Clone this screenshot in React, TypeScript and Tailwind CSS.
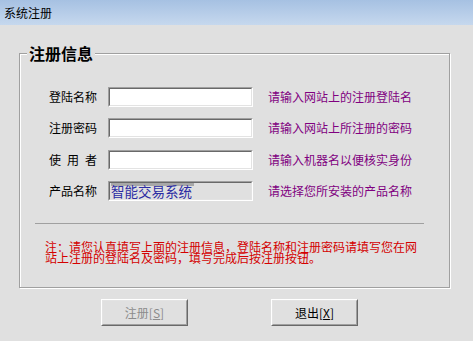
import React from "react";

const font = { fontFamily: '"Noto Sans CJK SC", "Noto Sans", sans-serif' };

function Sunken({ children, disabled }: { children?: React.ReactNode; disabled?: boolean }) {
  return (
    <div className="w-[145px] h-[20px] border border-t-[#a0a0a0] border-l-[#a0a0a0] border-b-white border-r-white">
      <div
        className={`w-full h-full border border-t-[#696969] border-l-[#696969] border-b-[#e3e3e3] border-r-[#e3e3e3] ${
          disabled ? "bg-[#e0e0e0]" : "bg-white"
        } flex items-center`}
      >
        {children}
      </div>
    </div>
  );
}

function Row({ label, hint, children, mt }: { label: React.ReactNode; hint: string; children?: React.ReactNode; mt: string }) {
  return (
    <div className={`flex items-center h-[20px] ${mt}`}>
      <div className="ml-[29px] w-[48px] text-[12px] leading-[12px] text-black">{label}</div>
      <div className="ml-[11px]">{children}</div>
      <div className="ml-[15px] text-[12px] leading-[12px] text-[#800080]">{hint}</div>
    </div>
  );
}

function Button({ children, disabled }: { children: React.ReactNode; disabled?: boolean }) {
  return (
    <div className="w-[87px] h-[27px] border border-t-white border-l-white border-b-[#696969] border-r-[#696969]">
      <div
        className={`w-full h-full border border-t-[#e3e3e3] border-l-[#e3e3e3] border-b-[#a0a0a0] border-r-[#a0a0a0] flex items-center justify-center text-[12px] ${
          disabled ? "text-[#8c8c8c]" : "text-black"
        }`}
      >
        {children}
      </div>
    </div>
  );
}

export default function App() {
  return (
    <div className="w-[473px] h-[341px] bg-[#e0e0e0] overflow-hidden" style={font}>
      <div className="h-[25px] bg-gradient-to-b from-[#a6c1e2] to-[#c6d8ee] flex items-center pl-[4px] text-[12px] text-black">
        系统注册
      </div>
      <div className="relative ml-[19px] mt-[28px] w-[431px] h-[235px] border border-[#a0a0a0] shadow-[1px_1px_0_#ffffff,inset_1px_1px_0_#ffffff]">
        <div className="absolute left-[7px] top-[-10px] bg-[#e0e0e0] px-[2px] text-[16px] leading-[18px] font-bold text-black">
          注册信息
        </div>
        <div className="pt-[33px] flex flex-col">
          <Row label="登陆名称" hint="请输入网站上的注册登陆名" mt="mt-0">
            <Sunken />
          </Row>
          <Row label="注册密码" hint="请输入网站上所注册的密码" mt="mt-[11px]">
            <Sunken />
          </Row>
          <Row
            label={
              <div className="flex justify-between">
                <span>使</span>
                <span>用</span>
                <span>者</span>
              </div>
            }
            hint="请输入机器名以便核实身份"
            mt="mt-[12px]"
          >
            <Sunken />
          </Row>
          <Row label="产品名称" hint="请选择您所安装的产品名称" mt="mt-[11px]">
            <Sunken disabled>
              <span className="ml-[1px] text-[13.5px] leading-[16px] text-[#2b2ba3] bg-[linear-gradient(#a8a8a8_0,#a8a8a8_3px,transparent_3px)] pr-[2px]">
                智能交易系统
              </span>
            </Sunken>
          </Row>
          <div className="ml-[15px] mt-[22px] w-[389px] h-px bg-[#a0a0a0]" />
          <div className="ml-[25px] mt-[17px] w-[376px] text-[12px] leading-[11px] text-[#d40000]">
            注：请您认真填写上面的注册信息，登陆名称和注册密码请填写您在网站上注册的登陆名及密码，填写完成后按注册按钮。
          </div>
        </div>
      </div>
      <div className="flex mt-[11px] ml-[101px] gap-[83px]">
        <Button disabled>
          注册[<span className="underline">S</span>]
        </Button>
        <Button>
          退出[<span className="underline">X</span>]
        </Button>
      </div>
    </div>
  );
}
